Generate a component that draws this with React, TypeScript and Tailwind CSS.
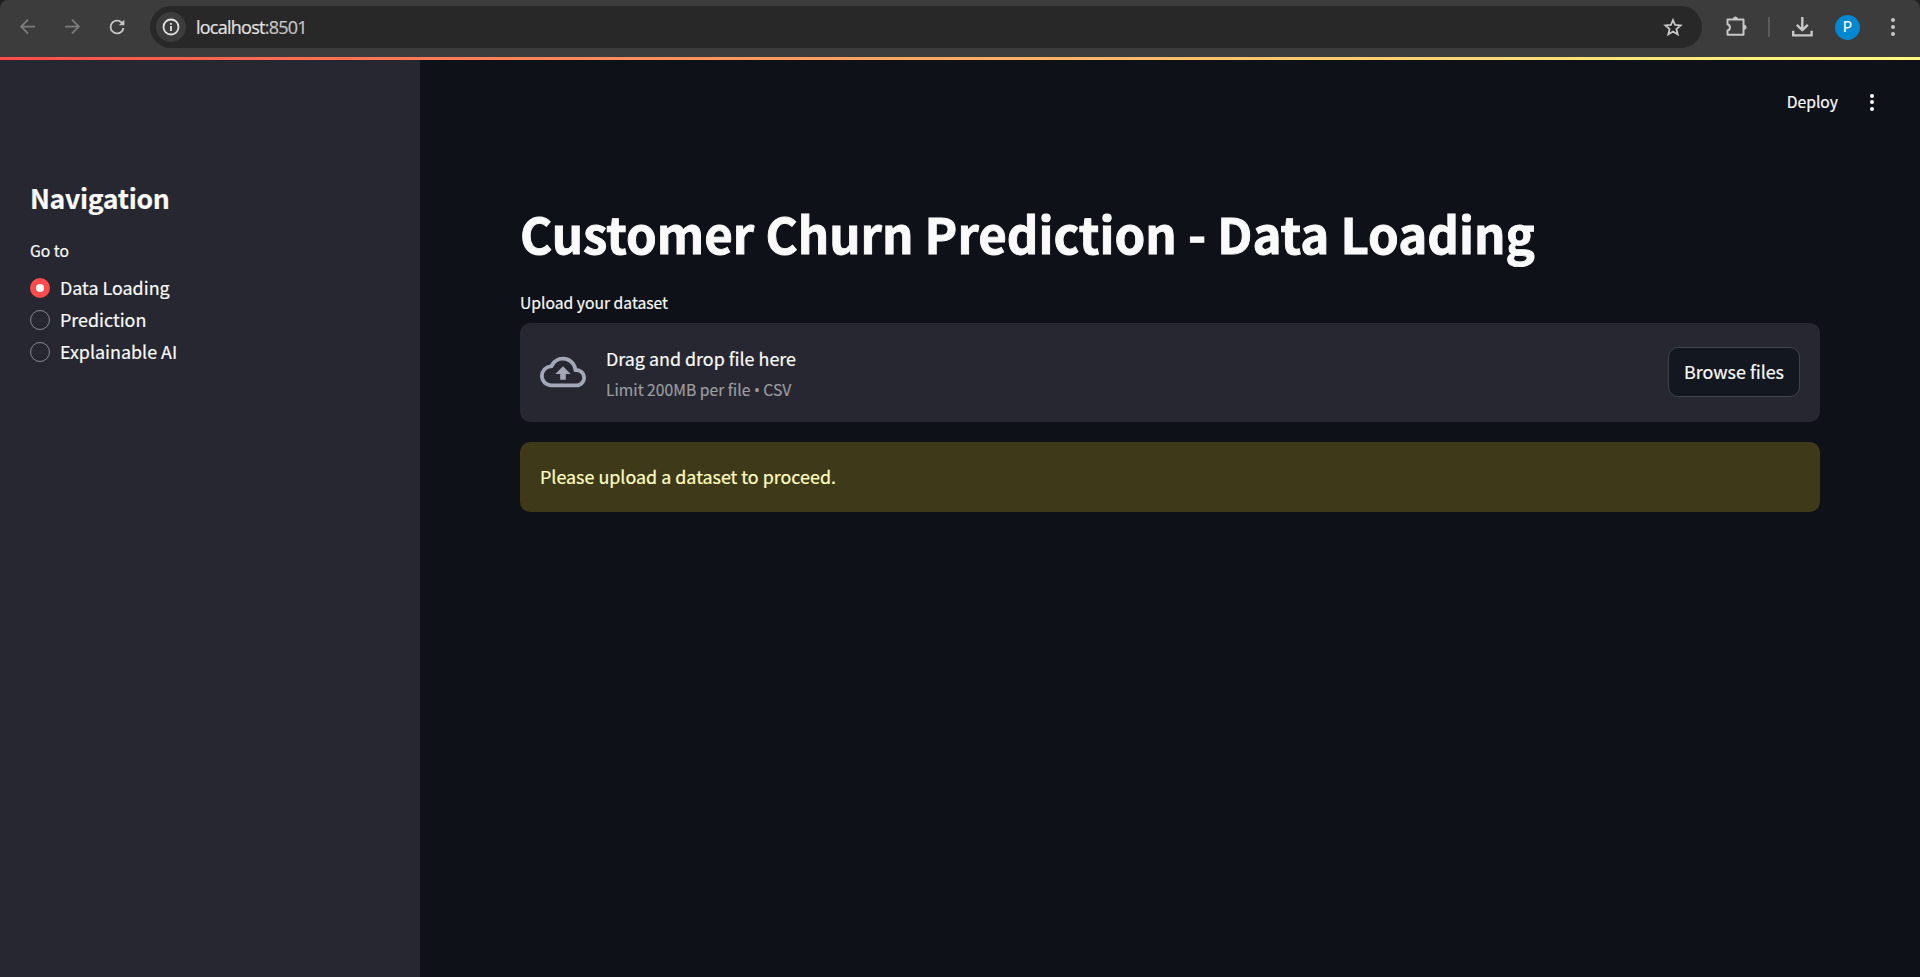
import React from "react";

const pages = ["Data Loading", "Prediction", "Explainable AI"];

function BrowserBar() {
  return (
    <div className="h-[57px] shrink-0 bg-[#1f1f1f]">
      <div className="flex h-full items-start rounded-t-[8px] bg-[#3c3c3c] pt-[6px]">
        <div className="flex h-[42px] w-[150px] shrink-0 items-center">
          <svg className="ml-[18px] h-5 w-5 text-[#7b7b7b]" viewBox="0 0 20 20" fill="none" stroke="currentColor" strokeWidth="1.8">
            <path d="M17 9.6H3.4M10 2.7L3.2 9.6L10 16.5" />
          </svg>
          <svg className="ml-[24px] h-5 w-5 text-[#7b7b7b]" viewBox="0 0 20 20" fill="none" stroke="currentColor" strokeWidth="1.8">
            <path d="M3 9.6H16.6M10 2.7L16.8 9.6L10 16.5" />
          </svg>
          <svg className="ml-[24px] h-[22px] w-[22px] text-[#c7c7c7]" viewBox="0 0 24 24" fill="currentColor">
            <path d="M17.65 6.35A7.96 7.96 0 0 0 12 4a8 8 0 1 0 8 9h-2.1A6 6 0 1 1 12 6c1.66 0 3.14.69 4.22 1.78L14 10h6V4z" />
          </svg>
        </div>
        <div className="flex h-[42px] w-[1552px] shrink-0 items-center rounded-full bg-[#282828] pr-[19px] pl-[6px]">
          <div className="flex h-[30px] w-[30px] items-center justify-center rounded-full bg-[#3c3c3c]">
            <svg className="h-[18px] w-[18px] text-[#e3e3e3]" viewBox="0 0 18 18" fill="none" stroke="currentColor" strokeWidth="1.8">
              <circle cx="9" cy="9" r="7.5" />
              <path d="M9 8V13M9 5V6.8" />
            </svg>
          </div>
          <span className="ml-[10px] font-['Open_Sans','Noto_Sans',sans-serif] text-[18px] leading-[24px] tracking-[-0.75px] text-[#e3e3e3]">
            localhost<span className="text-[#c7c7c7]">:8501</span>
          </span>
          <svg className="ml-auto h-5 w-5 text-[#c7c7c7]" viewBox="0 0 20 20" fill="none" stroke="currentColor" strokeWidth="1.8">
            <path d="M10 3L12.1 8L17.6 8.4L13.4 12L14.7 17.4L10 14.5L5.3 17.4L6.6 12L2.4 8.4L7.9 8Z" />
          </svg>
        </div>
        <div className="flex h-[42px] items-center">
          <svg className="ml-[22px] h-6 w-6 text-[#c7c7c7]" viewBox="0 0 24 24">
            <path d="M4 5.4H20V20.6H4V16.4A3.2 3.2 0 0 0 4 10.2Z" transform="translate(-.5 -.9)" fill="none" stroke="currentColor" strokeWidth="2" strokeLinejoin="round" />
            <path d="M9 4a2.5 2.5 0 0 1 5 0ZM20 9.7a2.5 2.5 0 0 1 0 5Z" fill="currentColor" />
          </svg>
          <div className="ml-[20px] h-5 w-[2px] bg-[#5b5b5b]" />
          <svg className="ml-[20px] h-6 w-6 text-[#c7c7c7]" viewBox="0 0 24 24" fill="none" stroke="currentColor" strokeWidth="2.4">
            <path d="M12.3 2V15M6.8 9.8L12.3 15.2L17.8 9.8M3.2 15.8V20.4H21.6V15.8" strokeLinejoin="round" />
          </svg>
          <div className="ml-[21px] flex h-[25px] w-[25px] items-center justify-center rounded-full bg-[#0288d1] font-[Roboto,sans-serif] text-[14px] leading-none text-white">P</div>
          <div className="ml-[30.5px] flex flex-col gap-[3px]">
            {[0, 1, 2].map((i) => (
              <div key={i} className="h-1 w-1 rounded-full bg-[#c7c7c7]" />
            ))}
          </div>
        </div>
      </div>
    </div>
  );
}

function Sidebar() {
  return (
    <aside className="flex w-[420px] shrink-0 flex-col bg-[#262730] pt-[120px] pl-[30px]">
      <h2 className="text-[26.6px] leading-[36px] font-bold tracking-[-0.3px]">Navigation</h2>
      <p className="mt-[23px] text-[15.7px] leading-[24px]">Go to</p>
      <div className="mt-[9px] flex flex-col">
        {pages.map((page, i) => (
          <label key={page} className="flex h-8 items-center">
            {i === 0 ? (
              <span className="flex h-5 w-5 items-center justify-center rounded-full bg-[#ff4b4b]">
                <span className="h-2 w-2 rounded-full bg-[#fafafa]" />
              </span>
            ) : (
              <span className="h-5 w-5 rounded-full border border-[#85858c]" />
            )}
            <span className="ml-[10px] pb-[2px] text-[17.9px] leading-[30px]">{page}</span>
          </label>
        ))}
      </div>
    </aside>
  );
}

function Uploader() {
  return (
    <section className="mt-[8px] flex h-[99px] items-center rounded-[10px] bg-[#262730] px-5 pb-px">
      <svg className="h-[46px] w-[46px] text-[#a3a8b8]" viewBox="0 0 24 24" fill="currentColor">
        <path d="M19.35 10.04A7.49 7.49 0 0012 4C9.11 4 6.6 5.64 5.35 8.04A5.994 5.994 0 000 14c0 3.31 2.69 6 6 6h13c2.76 0 5-2.24 5-5 0-2.64-2.05-4.78-4.65-4.96zM19 18H6c-2.21 0-4-1.79-4-4 0-2.05 1.53-3.76 3.56-3.97l1.07-.11.5-.95A5.469 5.469 0 0112 6c2.62 0 4.88 1.86 5.39 4.43l.3 1.5 1.53.11A2.98 2.98 0 0122 15c0 1.65-1.35 3-3 3zM8 13h2.55v3h2.9v-3H16l-4-4z" />
      </svg>
      <div className="ml-5 flex flex-col pt-[2px]">
        <span className="text-[17.9px] leading-[32px]">Drag and drop file here</span>
        <span className="mt-[2px] text-[15.7px] leading-[28px] text-[#9b9ca1]">
          Limit 200MB per file <span className="font-['Open_Sans',sans-serif] leading-none">•</span> CSV
        </span>
      </div>
      <button className="ml-auto flex h-[50px] w-[132px] items-center justify-center rounded-[10px] border border-[#41434b] bg-[#131720] pb-[2px] text-[17.9px]">
        Browse files
      </button>
    </section>
  );
}

export default function App() {
  return (
    <div className="flex h-[977px] w-[1920px] flex-col overflow-hidden bg-[#0e1117] font-['Noto_Sans_CJK_SC',sans-serif] text-[#fafafa] [-webkit-text-stroke:0.2px]">
      <BrowserBar />
      <div className="h-[3px] shrink-0 bg-linear-to-r from-[#ff4b4b] to-[#fffd80]" />
      <div className="flex flex-1">
        <Sidebar />
        <main className="flex flex-1 flex-col">
          <header className="flex h-[84px] items-center justify-end pr-[46px]">
            <span className="text-[15.7px] leading-[24px]">Deploy</span>
            <div className="ml-[32px] flex flex-col gap-[2.5px]">
              {[0, 1, 2].map((i) => (
                <div key={i} className="h-1 w-1 rounded-full bg-[#fafafa]" />
              ))}
            </div>
          </header>
          <div className="flex flex-col px-[100px] pt-[56px]">
            <h1 className="text-[49.2px] leading-[66px] font-bold whitespace-nowrap [-webkit-text-stroke:0.9px_#fafafa]">
              Customer Churn Prediction - Data Loading
            </h1>
            <p className="mt-[25px] text-[15.7px] leading-[24px]">Upload your dataset</p>
            <Uploader />
            <div className="mt-5 flex h-[70px] items-center rounded-[10px] bg-[#3e3918] px-5 pb-[2px] text-[17.9px] text-[#ffffc2]">
              Please upload a dataset to proceed.
            </div>
          </div>
        </main>
      </div>
    </div>
  );
}
